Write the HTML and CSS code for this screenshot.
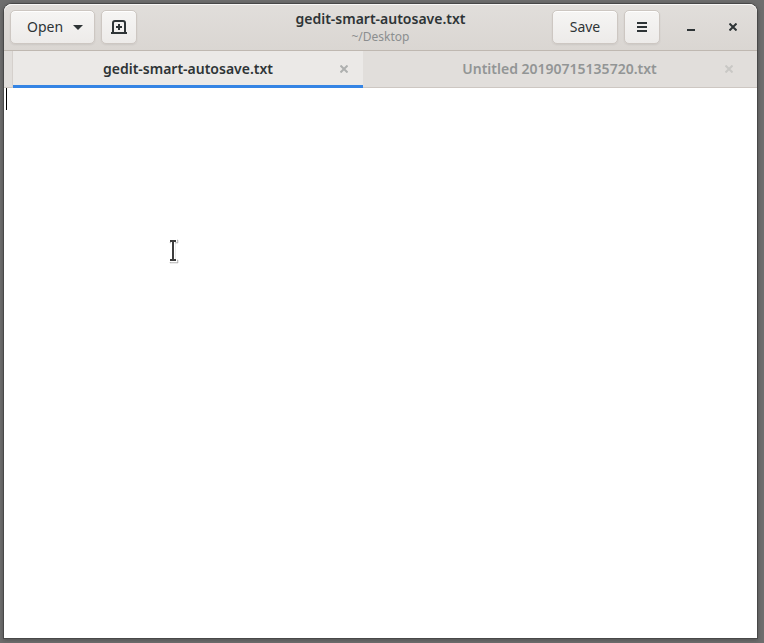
FILE: index.html
```html
<!DOCTYPE html>
<html lang="en">
<head>
<meta charset="utf-8">
<title>gedit-smart-autosave.txt</title>
<link rel="stylesheet" href="styles.css">
</head>
<body>
<main class="window">
  <header class="headerbar">
    <div class="group">
      <button class="button open" type="button">Open
        <svg width="10" height="5" viewBox="0 0 10 5" aria-hidden="true"><path d="M0 0h10L5 5z"/></svg>
      </button>
      <button class="button icon" type="button" aria-label="New tab">
        <svg width="16" height="14" viewBox="0 0 16 14" aria-hidden="true"><path d="M2 12V3Q2 1 4 1h8q2 0 2 2v9" fill="none" stroke="currentColor" stroke-width="2"/><path d="M0 12h16v2H0zM7 4h2v2h2v2H9v2H7V8H5V6h2z"/></svg>
      </button>
    </div>
    <div class="heading">
      <h1>gedit-smart-autosave.txt</h1>
      <p>~/Desktop</p>
    </div>
    <div class="group end">
      <button class="button save" type="button">Save</button>
      <button class="button icon" type="button" aria-label="Menu">
        <svg width="10" height="10" viewBox="0 0 10 10" aria-hidden="true"><path d="M0 0h10v2H0zM0 4h10v2H0zM0 8h10v2H0z"/></svg>
      </button>
      <div class="controls">
        <button class="control" type="button" aria-label="Minimize">
          <svg width="8" height="8" viewBox="0 0 8 8" aria-hidden="true"><path d="M0 6h8v2H0z"/></svg>
        </button>
        <button class="control" type="button" aria-label="Close">
          <svg width="8" height="8" viewBox="0 0 8 8" aria-hidden="true"><path d="M0.5 0.5l7 7M7.5 0.5l-7 7" stroke="currentColor" stroke-width="2"/></svg>
        </button>
      </div>
    </div>
  </header>
  <nav class="tabs" aria-label="Documents">
    <div class="tab active">
      <button class="label" type="button">gedit-smart-autosave.txt</button>
      <button class="close" type="button" aria-label="Close gedit-smart-autosave.txt">
        <svg width="8" height="8" viewBox="0 0 8 8" aria-hidden="true"><path d="M0.5 0.5l7 7M7.5 0.5l-7 7" stroke="currentColor" stroke-width="2"/></svg>
      </button>
    </div>
    <div class="tab inactive">
      <button class="label" type="button">Untitled 20190715135720.txt</button>
      <button class="close" type="button" aria-label="Close Untitled 20190715135720.txt">
        <svg width="8" height="8" viewBox="0 0 8 8" aria-hidden="true"><path d="M0.5 0.5l7 7M7.5 0.5l-7 7" stroke="currentColor" stroke-width="2"/></svg>
      </button>
    </div>
  </nav>
  <div class="editor">
    <textarea aria-label="Document text"></textarea>
    <span class="caret"></span>
  </div>
</main>
<svg class="pointer" width="14" height="30" viewBox="0 0 14 30" aria-hidden="true">
  <path class="shade" d="M3 4h8v3H8v17h3v3H3v-3h2V7H3z"/>
  <path class="rim" d="M2 3h8v3H8v17h2v3H2v-3h2V6H2z"/>
  <path class="beam" d="M3 4h6v2H7v17h2v2H3v-2h2V6H3z"/>
</svg>
</body>
</html>
```
FILE: styles.css
```css
* {
  box-sizing: border-box;
}

body {
  margin: 0;
  height: 100vh;
  padding: 4px 7px 5px 4px;
  display: flex;
  background: #6e6e6e;
  color: #2e3436;
  font: 14px/20px "Noto Sans", "Open Sans", sans-serif;
}

button {
  margin: 0;
  padding: 0;
  border: 0;
  background: none;
  color: inherit;
  font: inherit;
}

svg {
  display: block;
  fill: currentColor;
}

.window {
  flex: 1;
  min-width: 0;
  display: flex;
  flex-direction: column;
  border-radius: 8px 8px 0 0;
  background: #fff;
  box-shadow: 0 0 0 1px #484848, 0 1px 4px 1px #505050;
}

.headerbar {
  height: 47px;
  padding: 6px;
  display: grid;
  grid-template-columns: 1fr auto 1fr;
  border-bottom: 1px solid #bfb8b1;
  border-radius: 8px 8px 0 0;
  background: linear-gradient(#e1dedb, #dad6d2);
  box-shadow: inset 0 1px #f8f7f6;
}

.group {
  display: flex;
  gap: 6px;
}

.end {
  justify-content: flex-end;
}

.button {
  height: 34px;
  display: flex;
  align-items: center;
  justify-content: center;
  border: 1px solid #cdc7c2;
  border-radius: 5px;
  background: linear-gradient(#f6f5f4, #edebe9);
  box-shadow: inset 0 1px #fff, 0 1px 2px #00000012;
}

.open {
  width: 85px;
  padding-left: 5px;
  gap: 10px;
}

.save {
  width: 66px;
}

.icon {
  width: 36px;
}

.heading {
  text-align: center;
}

.heading h1 {
  margin: 0;
  font-size: 14px;
  font-weight: 600;
  line-height: 18px;
}

.heading p {
  margin: 0;
  color: #8b8e8f;
  font-size: 12px;
  line-height: 18px;
}

.controls {
  margin-left: 4px;
  margin-right: -3px;
  display: flex;
}

.control {
  width: 42px;
  height: 34px;
  display: grid;
  place-items: center;
}

.tabs {
  height: 37px;
  padding: 0 9px;
  display: grid;
  grid-template-columns: 350fr 385fr;
  background: #e1dedb;
  box-shadow: inset 0 -1px #cdc7c2;
}

.tab {
  min-width: 0;
  padding: 0 12px 2px;
  display: grid;
  grid-template-columns: 14px 1fr 14px;
  align-items: center;
}

.label {
  grid-column: 2;
  font-weight: 600;
  white-space: nowrap;
}

.active {
  background: #ebe9e7;
  box-shadow: inset 0 -3px #3584e4, -1px 0 #d5d0cc;
}

.inactive {
  padding-left: 20px;
  color: #929595;
}

.close {
  height: 20px;
  display: grid;
  place-items: center;
  color: #aeb0af;
}

.inactive .close {
  color: #c9c8c5;
}

.editor {
  flex: 1;
  position: relative;
  display: flex;
}

.editor textarea {
  flex: 1;
  min-width: 0;
  padding: 0 3px;
  border: 0;
  outline: 0;
  resize: none;
  background: #fff;
  color: inherit;
  font: 16px/22px "Liberation Mono", monospace;
}

.caret {
  position: absolute;
  top: 0;
  left: 2px;
  width: 1px;
  height: 22px;
  background: #000;
}

.pointer {
  position: absolute;
  left: 167px;
  top: 236px;
}

.shade {
  fill: #00000028;
  stroke: #00000028;
}

.rim {
  fill: #fff;
}

.beam {
  fill: #3c3c3c;
}
```
